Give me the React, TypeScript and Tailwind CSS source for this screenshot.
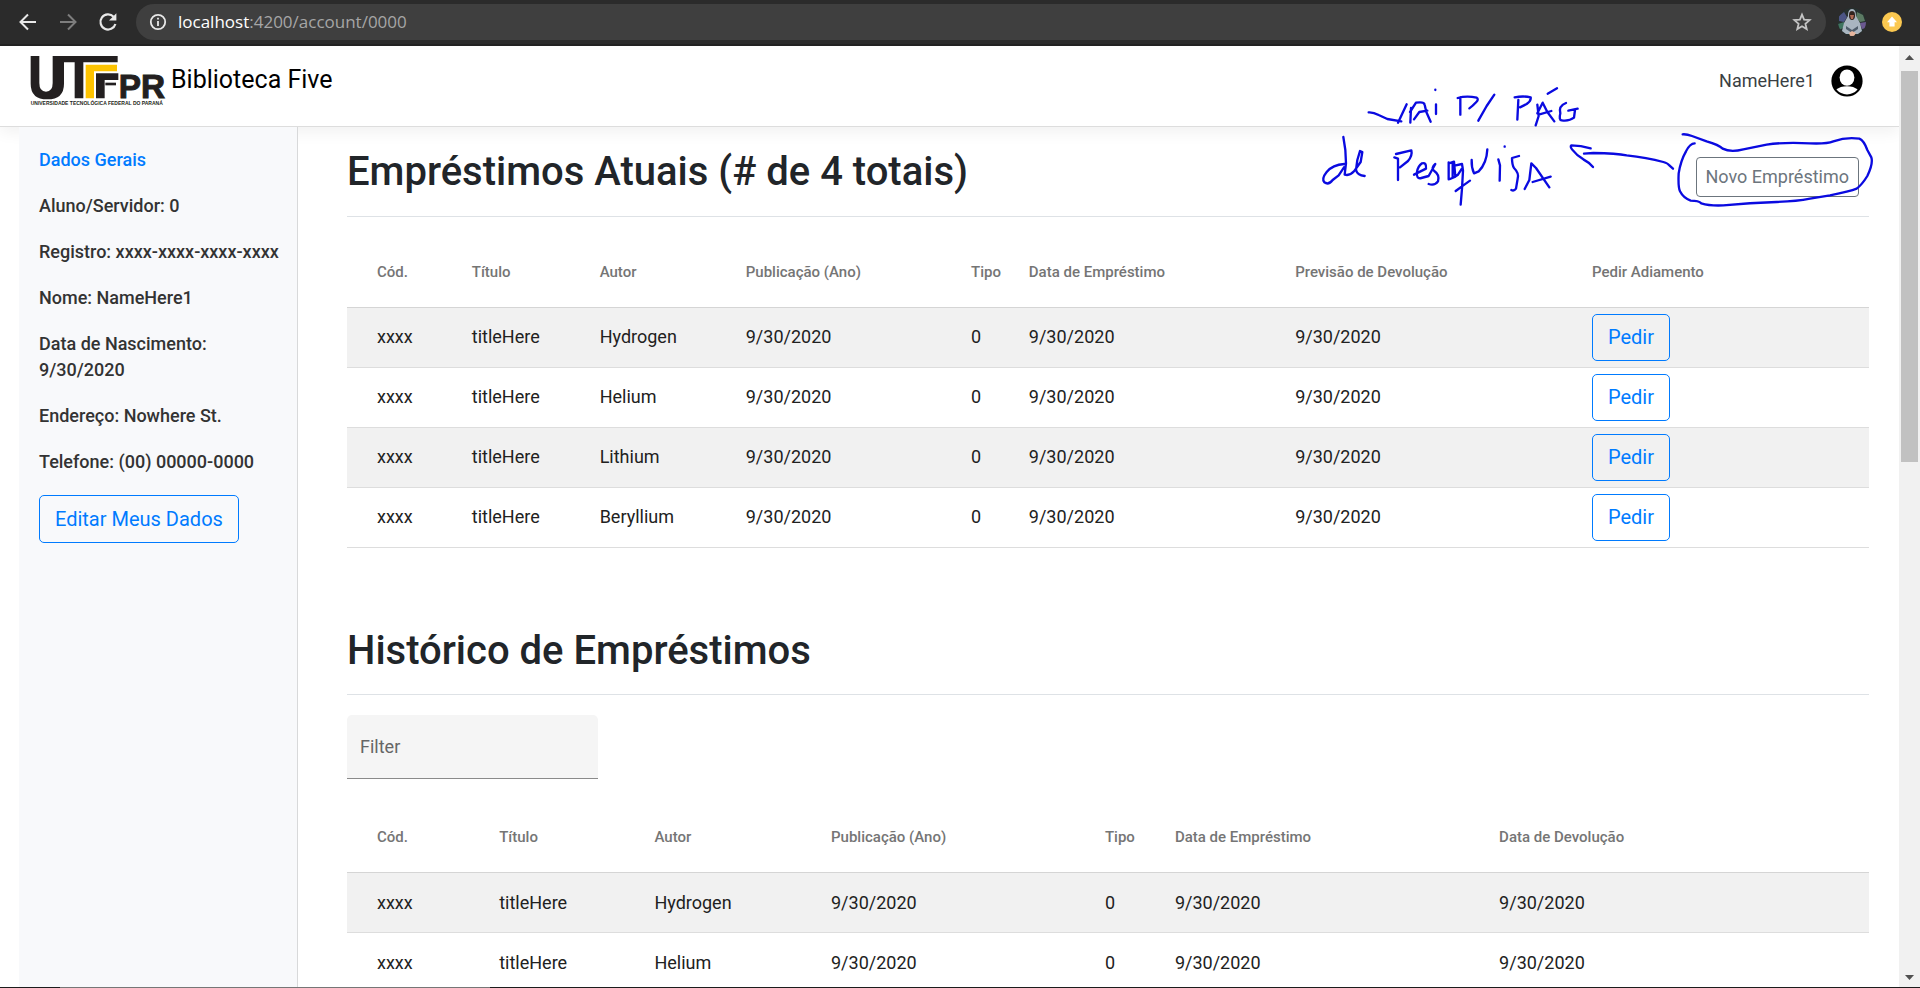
import React from "react";

type Loan = {
  code: string;
  title: string;
  author: string;
  year: string;
  kind: number;
  loanDate: string;
  returnDate: string;
};

const loan = (author: string): Loan => ({
  code: "xxxx",
  title: "titleHere",
  author,
  year: "9/30/2020",
  kind: 0,
  loanDate: "9/30/2020",
  returnDate: "9/30/2020",
});

const currentLoans = ["Hydrogen", "Helium", "Lithium", "Beryllium"].map(loan);
const pastLoans = ["Hydrogen", "Helium"].map(loan);

const details = [
  "Aluno/Servidor: 0",
  "Registro: xxxx-xxxx-xxxx-xxxx",
  "Nome: NameHere1",
  "Data de Nascimento: 9/30/2020",
  "Endereço: Nowhere St.",
  "Telefone: (00) 00000-0000",
];

const currentColumns = [
  { label: "Cód.", width: "w-[8.2%]" },
  { label: "Título", width: "w-[8.4%]" },
  { label: "Autor", width: "w-[9.6%]" },
  { label: "Publicação (Ano)", width: "w-[14.8%]" },
  { label: "Tipo", width: "w-[3.8%]" },
  { label: "Data de Empréstimo", width: "w-[17.5%]" },
  { label: "Previsão de Devolução", width: "w-[19.5%]" },
  { label: "Pedir Adiamento", width: "w-[18.2%]" },
];

const pastColumns = [
  { label: "Cód.", width: "w-[10%]" },
  { label: "Título", width: "w-[10.2%]" },
  { label: "Autor", width: "w-[11.6%]" },
  { label: "Publicação (Ano)", width: "w-[18%]" },
  { label: "Tipo", width: "w-[4.6%]" },
  { label: "Data de Empréstimo", width: "w-[21.3%]" },
  { label: "Data de Devolução", width: "w-[24.3%]" },
];

function BrowserBar() {
  return (
    <div className="flex h-[46px] shrink-0 items-center border-b-2 border-[#222222] bg-[#2b2b2b] pr-[18px] pl-4">
      <button type="button" aria-label="Back" className="flex size-6 items-center justify-center text-[#e8e8e8]">
        <svg viewBox="0 0 24 24" className="size-6" fill="none" stroke="currentColor" strokeWidth="2">
          <path d="M20 12H5M12 4.5L4.5 12L12 19.5" />
        </svg>
      </button>
      <button type="button" aria-label="Forward" className="ml-4 flex size-6 items-center justify-center text-[#7d7d7d]">
        <svg viewBox="0 0 24 24" className="size-6" fill="none" stroke="currentColor" strokeWidth="2">
          <path d="M4 12H19M12 4.5L19.5 12L12 19.5" />
        </svg>
      </button>
      <button type="button" aria-label="Reload" className="ml-4 flex size-6 items-center justify-center text-[#e8e8e8]">
        <svg viewBox="0 0 24 24" className="size-6">
          <path d="M17.6 6.7A7.6 7.6 0 1 0 19.4 14" fill="none" stroke="currentColor" strokeWidth="2.2" />
          <path d="M20.4 3.2V10.6H13Z" fill="currentColor" />
        </svg>
      </button>
      <div className="ml-4 flex h-9 flex-1 items-center rounded-full bg-[#3f3f3f] pr-3 pl-3">
        <svg viewBox="0 0 20 20" className="size-5 shrink-0 text-[#e8e8e8]">
          <circle cx="10" cy="10" r="7.2" fill="none" stroke="currentColor" strokeWidth="1.8" />
          <path d="M9.1 9H10.9V14H9.1ZM9.1 5.8H10.9V7.6H9.1Z" fill="currentColor" />
        </svg>
        <p className="flex-1 pl-[10px] font-['Open_Sans',sans-serif] text-[17px] leading-6 text-[#a6a6a6]">
          <span className="text-white">localhost</span>:4200/account/0000
        </p>
        <svg viewBox="0 0 24 24" className="size-6 shrink-0" fill="none" stroke="#c4c4c4" strokeWidth="1.8">
          <path d="M12 4.6L14.1 9.7L19.6 10.1L15.4 13.7L16.7 19.1L12 16.2L7.3 19.1L8.6 13.7L4.4 10.1L9.9 9.7Z" />
        </svg>
      </div>
      <div className="ml-3 flex items-center gap-4">
        <svg viewBox="0 0 28 28" className="size-7">
          <defs>
            <clipPath id="avatar">
              <circle cx="14" cy="14" r="14" />
            </clipPath>
          </defs>
          <g clipPath="url(#avatar)">
            <rect width="28" height="28" fill="#26302f" />
            <path d="M1 8l5-4 3 5-3 5-5-1z" fill="#4c5585" />
            <path d="M19 4l6 3 2 6-5 1-4-4z" fill="#5b7a63" />
            <path d="M0 16l6-2 1 5-6 3z" fill="#3f7560" />
            <path d="M22 15l6-1v6l-4 1z" fill="#6b5890" />
            <path d="M14 1c3 0 4 3 4 7l4 7 2 8-4 3H8l-4-3 2-8 4-7c0-4 1-7 4-7z" fill="#a9b5c0" />
            <path d="M14 3c3 0 3 3 3 5s-1 4-3 4-3-2-3-4 0-5 3-5z" fill="#33241f" />
            <path d="M12 7h4l-1 4h-2z" fill="#b06a55" />
            <path d="M8 18l6 4 6-4v3l-6 4-6-4z" fill="#4f5d6b" />
            <path d="M11 25l3-2 4 2-2 3h-4z" fill="#e6b59d" />
          </g>
        </svg>
        <svg viewBox="0 0 20 20" className="size-5">
          <circle cx="10" cy="10" r="10" fill="#fbc850" />
          <path d="M10 4.6L15 10.2H12.6V14.6H7.4V10.2H5Z" fill="#ffffff" />
        </svg>
      </div>
    </div>
  );
}

function Logo() {
  return (
    <svg viewBox="0 0 408 156" className="h-[52px] w-[136px]" role="img" aria-label="UTFPR">
      <g fill="#231f20">
        <path d="M2 3H28V84Q28 110 48 110Q68 110 68 84V3H263V22H160V130H134V22H102V86Q102 133 52 133Q2 133 2 86Z" />
        <path d="M198 55H265V75H224V130H198Z" />
        <path d="M226 83H258V91H226Z" />
      </g>
      <path d="M167 29H261V49H192V130H167Z" fill="#fdc300" />
      <g fill="#231f20" fontFamily="'Liberation Sans', sans-serif" fontWeight="700">
        <text x="266" y="130" fontSize="100" stroke="#231f20" strokeWidth="3">PR</text>
        <text x="2" y="150" fontSize="15">UNIVERSIDADE TECNOLÓGICA FEDERAL DO PARANÁ</text>
      </g>
    </svg>
  );
}

function Header() {
  return (
    <header className="relative flex h-[81px] shrink-0 items-start justify-between border-b border-[#dddddd] bg-white pr-9 pl-[30px] shadow-[0_5px_15px_rgba(0,0,0,0.06)]">
      <a href="#inicio" className="flex items-start gap-1 pt-[9px] text-black">
        <Logo />
        <span className="pt-[10px] pl-[1px] text-[25px] leading-[30px]">Biblioteca Five</span>
      </a>
      <div className="flex items-center gap-4 pt-[19px] text-[#3a3f44]">
        <span className="text-lg leading-[26px]">NameHere1</span>
        <svg viewBox="0 0 32 32" className="size-8">
          <circle cx="16" cy="16" r="15.6" fill="#000" />
          <ellipse cx="16" cy="12.6" rx="7.4" ry="8.2" fill="#fff" />
          <path d="M5.4 24.6Q9 21.2 16 21.2Q23 21.2 26.6 24.6Q22.4 29.4 16 29.4Q9.6 29.4 5.4 24.6Z" fill="#fff" />
        </svg>
      </div>
    </header>
  );
}

function Sidebar() {
  return (
    <aside className="relative z-10 ml-[19px] w-[279px] shrink-0 border-r border-[#d8d9da] bg-[#f8f9fb] pt-[10px] text-lg leading-[26px] font-medium text-[#333333]">
      <ul>
        <li>
          <a href="#dados" className="block py-[10px] pr-3 pl-5 text-[#007bff]">
            Dados Gerais
          </a>
        </li>
        {details.map((text) => (
          <li key={text} className="py-[10px] pr-3 pl-5">
            {text}
          </li>
        ))}
      </ul>
      <button
        type="button"
        className="mt-[10px] ml-5 h-12 rounded-[5px] border border-[#007bff] px-[15px] text-xl font-normal text-[#007bff]"
      >
        Editar Meus Dados
      </button>
    </aside>
  );
}

function LoanTable({
  columns,
  rows,
  withRequest,
}: {
  columns: { label: string; width: string }[];
  rows: Loan[];
  withRequest?: boolean;
}) {
  return (
    <table className="w-full table-fixed border-collapse text-left">
      <thead>
        <tr className="h-[70px] border-b border-[#d5d5d5]">
          {columns.map((c, i) => (
            <th
              key={c.label}
              scope="col"
              className={`${c.width} ${i === 0 ? "pl-[30px]" : ""} text-[15px] font-medium whitespace-nowrap text-[#757575]`}
            >
              {c.label}
            </th>
          ))}
        </tr>
      </thead>
      <tbody>
        {rows.map((r) => (
          <tr key={r.author} className="h-[60px] border-b border-[#dddddd] text-lg text-[#212121] odd:bg-[#f1f1f1]">
            <td className="pl-[30px]">{r.code}</td>
            <td>{r.title}</td>
            <td>{r.author}</td>
            <td>{r.year}</td>
            <td>{r.kind}</td>
            <td>{r.loanDate}</td>
            <td>{r.returnDate}</td>
            {withRequest && (
              <td>
                <button
                  type="button"
                  className="block h-[47px] rounded-[5px] border border-[#007bff] px-[15px] text-xl text-[#007bff]"
                >
                  Pedir
                </button>
              </td>
            )}
          </tr>
        ))}
      </tbody>
    </table>
  );
}

function InkNotes() {
  return (
    <svg
      viewBox="0 0 1740 420"
      className="pointer-events-none absolute top-[34px] right-[9px] z-20 h-[140px] w-[580px]"
      fill="none"
      stroke="#0a0ae0"
      strokeWidth="7"
      strokeLinecap="round"
      strokeLinejoin="round"
    >
      <path d="M176 97Q190 96 206 105L232 117L274 124M264 128L290 73" />
      <path d="M303 84L301 128M300 96L318 68Q342 64 344 74L349 96L362 125M312 118L328 96L352 92" />
      <path d="M378 73V102M376 29V30" />
      <path d="M451 52V104M443 54Q470 46 500 53Q507 58 499 66Q488 78 478 85M553 44L530 78L505 122" />
      <path d="M614 52Q640 47 662 52Q664 62 650 72L630 82M625 60L622 119" />
      <path d="M677 136L686 108L682 74M682 100L698 68L712 96L733 124M686 104L724 93M713 41L741 25" />
      <path d="M768 69Q745 78 751 100Q746 120 755 121Q778 124 792 113L795 90M775 92L803 86" />
      <path d="M100 171L106 210L108 250L104 284Q120 288 132 274L152 246L157 216L150 213L142 240L138 270Q142 286 164 288M103 252Q68 254 50 276Q34 296 43 307Q56 316 68 300L86 286L102 262" />
      <path d="M253 232L264 236L264 300M258 222L304 211Q308 226 294 243L270 262" />
      <path d="M312 284L348 266Q350 246 336 250Q324 258 321 276Q318 298 334 294L356 288L366 270L376 252Q362 264 372 272Q390 284 384 304Q374 318 356 312" />
      <path d="M416 247V298M417 250L432 245L436 290L420 297M428 250V292M437 256L456 252L459 272L456 326L452 374M458 262L444 284L438 288M437 333L460 316L480 302" />
      <path d="M485 240Q484 262 492 280L506 274Q530 250 532 208" />
      <path d="M565 238L570 256L569 302M584 199V200" />
      <path d="M627 228L606 234Q606 254 612 264Q628 280 623 296L618 326Q612 334 604 330" />
      <path d="M644 327L658 300L664 250L678 264L718 322M668 306L722 290" />
      <path d="M842 205Q812 196 784 196Q780 200 786 208Q800 226 820 238Q836 246 849 261M822 221L850 219Q920 220 950 226Q1010 232 1060 246Q1074 250 1078 256L1089 266" />
      <path d="M1154 190Q1140 190 1128 214Q1112 242 1106 280Q1104 322 1110 334Q1120 354 1142 362Q1166 362 1174 370Q1200 378 1240 376Q1320 368 1400 366Q1460 364 1500 356L1560 346Q1620 334 1640 326Q1656 314 1672 288Q1690 250 1684 232L1672 210Q1662 182 1648 176Q1610 170 1570 184Q1550 192 1500 190Q1420 186 1370 194L1300 208Q1262 218 1238 206Q1226 194 1190 184L1146 168Q1130 162 1118 163" />
    </svg>
  );
}

function ScrollTrack() {
  return (
    <div aria-hidden="true" className="flex w-[21px] shrink-0 flex-col items-center bg-[#f1f1f1]">
      <svg viewBox="0 0 21 25" className="h-[25px] w-[21px]">
        <path d="M6 14L10.500 9L15 14Z" fill="#505050" />
      </svg>
      <div className="h-[41.5%] w-[17px] bg-[#c1c1c1]" />
      <svg viewBox="0 0 21 21" className="mt-auto h-[21px] w-[21px]">
        <path d="M6 9L10.500 14L15 9Z" fill="#505050" />
      </svg>
    </div>
  );
}

export default function App() {
  return (
    <div className="flex h-screen flex-col overflow-hidden bg-white font-[Roboto,sans-serif]">
      <BrowserBar />
      <div className="flex min-h-0 flex-1">
        <div className="relative flex min-w-0 flex-1 flex-col overflow-hidden">
          <Header />
          <InkNotes />
          <div className="flex min-h-0 flex-1">
            <Sidebar />
            <main className="min-w-0 flex-1 pr-[30px] pl-[49px] text-[#212529]">
              <section className="pt-[21px]">
                <div className="mb-5 flex items-center justify-between border-b border-[#dee2e6] pr-[10px] pb-[10px]">
                  <h1 className="mb-[10px] text-[40px] leading-[48px] font-medium">
                    Empréstimos Atuais (# de 4 totais)
                  </h1>
                  <button
                    type="button"
                    className="h-10 rounded-[4px] border border-[#6c757d] px-[9px] text-lg text-[#6c757d]"
                  >
                    Novo Empréstimo
                  </button>
                </div>
                <LoanTable columns={currentColumns} rows={currentLoans} withRequest />
              </section>
              <section className="pt-[79px]">
                <h2 className="mb-5 border-b border-[#dee2e6] pb-[19px] text-[40px] leading-[48px] font-medium">
                  Histórico de Empréstimos
                </h2>
                <input
                  type="text"
                  aria-label="Filter"
                  placeholder="Filter"
                  className="mb-6 block h-16 w-[251px] rounded-t-[5px] border-b border-[#8a8a8a] bg-[#f5f5f5] px-[13px] text-lg text-[#212121] placeholder:text-[#666666]"
                />
                <LoanTable columns={pastColumns} rows={pastLoans} />
              </section>
            </main>
          </div>
        </div>
        <ScrollTrack />
      </div>
      <div className="flex h-px shrink-0">
        <div className="w-[60px] bg-[#1c1c1c]" />
        <div className="w-[430px] bg-[#767676]" />
        <div className="flex-1 bg-[#1c1c1c]" />
      </div>
    </div>
  );
}
